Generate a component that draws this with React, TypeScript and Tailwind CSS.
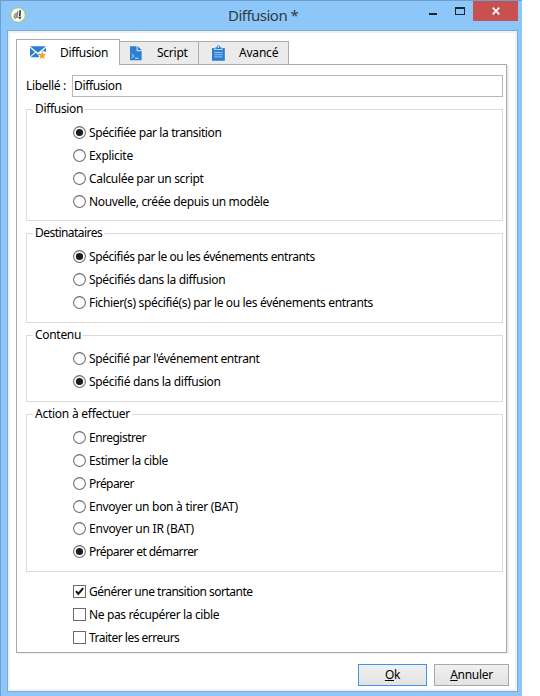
import type { ReactNode } from "react";

type Item = { label: string; on?: boolean; track?: string };

function Radio({ label, on, track = "" }: Item) {
  return (
    <label className="flex h-[22.9px] items-center gap-[3px] pl-[46px]">
      <svg className="shrink-0" width="13" height="13" viewBox="0 0 13 13">
        <circle cx="6.5" cy="6.5" r="5.9" fill="#fff" stroke="#6b6b6b" strokeWidth="1.05" />
        {on && <circle cx="6.5" cy="6.5" r="3.6" fill="#1d1d1d" />}
      </svg>
      <span className={`whitespace-nowrap pt-px leading-4 ${track}`}>{label}</span>
    </label>
  );
}

function Check({ label, on, track = "" }: Item) {
  return (
    <label className="flex h-[22.9px] items-center gap-[3px]">
      <svg className="shrink-0" width="13" height="13" viewBox="0 0 13 13">
        <rect x="0.5" y="0.5" width="12" height="12" fill="#fff" stroke="#6b6b6b" />
        {on && <path d="M3 6.2 5.3 9 10.2 3.2" fill="none" stroke="#111" strokeWidth="2" />}
      </svg>
      <span className={`whitespace-nowrap pt-px leading-4 ${track}`}>{label}</span>
    </label>
  );
}

function Group({ title, size, track, items }: { title: string; size: string; track: string; items: Item[] }) {
  return (
    <fieldset className={`border border-[#dcdcdc] ${size}`}>
      <legend className={`ml-[6px] h-4 px-[2px] leading-4 ${track}`}>{title}</legend>
      <div className="pt-[3.95px]">
        {items.map((i) => (
          <Radio key={i.label} {...i} />
        ))}
      </div>
    </fieldset>
  );
}

function Tab({ icon, className, children }: { icon: ReactNode; className: string; children: ReactNode }) {
  return <div className={`flex items-center border-[#acacac] ${className}`}>{icon}{children}</div>;
}

const mailIcon = (
  <svg width="17" height="14" viewBox="0 0 17 14">
    <path d="M0 .3H16L8 6.8Z" fill="#2b7fd0" />
    <path d="M0 1.7 5 6 0 10.5ZM16 1.7V6L13.2 5 11.3 6ZM.5 11.3 5.8 6.8 8 8.7 10 7.2 10.4 8.5 8.2 9 9.4 11.3Z" fill="#2b7fd0" />
    <path d="m12.2 5.2 1.1 2.7 2.9.3-2.2 1.9.7 2.9-2.5-1.5-2.5 1.5.7-2.9-2.2-1.9 2.9-.3Z" fill="#f2a02c" />
  </svg>
);

const scriptIcon = (
  <svg width="12" height="15" viewBox="0 0 12 15">
    <path d="M0 .3H6.6V5.2H11.6V14.3H0Z" fill="#2b7fd0" />
    <path d="M7.6 0 11.8 4.2H7.6Z" fill="#2b7fd0" />
    <path d="m1.7 8.2 2.1 1.8-2.1 1.9M5 12.2h3.5" fill="none" stroke="#e5f1fb" strokeWidth=".9" />
  </svg>
);

const clipIcon = (
  <svg width="13" height="16" viewBox="0 0 13 16">
    <path d="M0 3H2.3V5H10.5V3H12.8V15.7H0Z" fill="#2b7fd0" />
    <path d="M3.2 4.2V2.4H4.6C4.8-.5 8.2-.5 8.4 2.4H9.8V4.2Z" fill="#2b7fd0" />
    <circle cx="6.5" cy="1.9" r=".8" fill="#fff" />
    <path d="M2.2 7.5H10.6M2.2 9.7H10.6M2.2 11.9H10.6" stroke="#a5cdf0" strokeWidth=".9" />
  </svg>
);

export default function App() {
  return (
    <div className="h-[696px] w-[540px] overflow-hidden bg-white font-['Noto_Sans','Open_Sans',sans-serif] text-[12px] text-black">
      <div className="flex h-[696px] w-[522px] flex-col border-l border-t border-[#6c9fcf] bg-[#8dc7fa]">
        <header className="flex h-[29px] items-start">
          <svg className="ml-[9px] mt-[6px] shrink-0" width="16" height="16" viewBox="0 0 16 16">
            <circle cx="8" cy="8" r="7.3" fill="#f7f9f4" stroke="#a3bf55" strokeWidth=".9" />
            <path d="M7 6.2C5 5.8 3.8 8 4.2 10.5 4.5 12.5 6.5 11.5 7 9.5" fill="#aaa" stroke="#777" strokeWidth=".8" />
            <path d="M7.8 4 7.1 11" stroke="#777" strokeWidth="1.1" />
            <path d="M10.2 3.2 9.8 9.5" stroke="#333" strokeWidth="1.6" />
            <path d="m8 10.3 3.6-.5-1.6 2.6Z" fill="#444" />
          </svg>
          <h1 className="ml-[202px] mt-[4px] w-[72px] whitespace-nowrap text-[15px] leading-5 tracking-[-0.52px] text-[#333b43]">Diffusion *</h1>
          <div className="ml-[129px] mt-[12px] h-[2px] w-[8px] bg-[#1c2530]" />
          <div className="ml-[18px] mt-[6px] h-[8px] w-[10px] border border-t-2 border-[#1c2530]" />
          <div className="ml-auto mr-[4px] flex h-5 w-[45px] items-center justify-center bg-[#c75050]">
            <svg width="8" height="8" viewBox="0 0 8 8">
              <path d="m.7.7 6.6 6.6M7.3.7.7 7.3" stroke="#fff" strokeWidth="1.7" />
            </svg>
          </div>
        </header>

        <main className="ml-[6px] h-[662px] w-[511px] border border-[#78abd9] bg-white">
          <div className="flex h-[660px] flex-col border-2 border-[#f1f1f1] pl-[6px] pr-[5px] pt-[6px]">
            <nav className="relative z-10 -mb-px flex h-[26px] items-end">
              <Tab icon={mailIcon} className="h-[26px] w-[104px] gap-[13px] border-l border-r border-t bg-white pl-[13px]">
                <span className="tracking-[-0.33px]">Diffusion</span>
              </Tab>
              <Tab icon={scriptIcon} className="h-[24px] w-[79px] gap-[15px] border-b border-r border-t bg-[#ebebeb] pl-[10px]">
                <span className="tracking-[-0.25px]">Script</span>
              </Tab>
              <Tab icon={clipIcon} className="h-[24px] w-[90px] gap-[14px] border-b border-r border-t bg-[#ebebeb] pl-[13px]">
                <span className="tracking-[-0.2px]">Avancé</span>
              </Tab>
            </nav>

            <section className="h-[589px] w-[491px] border border-[#a9a9a9] pl-[9px] shadow-[2px_1px_0_#ededed]">
              <div className="mt-[10px] flex h-[22px] items-center">
                <span className="w-[46px] whitespace-nowrap tracking-[-0.33px]">Libellé :</span>
                <div className="flex h-[22px] w-[431px] items-center border border-[#b6b6bb] pl-px tracking-[-0.36px]">Diffusion</div>
              </div>
              <div className="mt-[4px] flex w-[477px] flex-col gap-1">
                <Group
                  title="Diffusion"
                  track="tracking-[-0.33px]"
                  size="h-[120px]"
                  items={[
                    { label: "Spécifiée par la transition", on: true, track: "tracking-[-0.38px]" },
                    { label: "Explicite", track: "tracking-[-0.3px]" },
                    { label: "Calculée par un script", track: "tracking-[-0.33px]" },
                    { label: "Nouvelle, créée depuis un modèle", track: "tracking-[-0.35px]" },
                  ]}
                />
                <Group
                  title="Destinataires"
                  track="tracking-[-0.55px]"
                  size="h-[98px]"
                  items={[
                    { label: "Spécifiés par le ou les événements entrants", on: true, track: "tracking-[-0.42px]" },
                    { label: "Spécifiés dans la diffusion", track: "tracking-[-0.34px]" },
                    { label: "Fichier(s) spécifié(s) par le ou les événements entrants", track: "tracking-[-0.35px]" },
                  ]}
                />
                <Group
                  title="Contenu"
                  track="tracking-[-0.3px]"
                  size="h-[75px]"
                  items={[
                    { label: "Spécifié par l'événement entrant", track: "tracking-[-0.36px]" },
                    { label: "Spécifié dans la diffusion", on: true, track: "tracking-[-0.31px]" },
                  ]}
                />
                <Group
                  title="Action à effectuer"
                  track="tracking-[-0.25px]"
                  size="h-[166px]"
                  items={[
                    { label: "Enregistrer", track: "tracking-[-0.52px]" },
                    { label: "Estimer la cible", track: "tracking-[-0.38px]" },
                    { label: "Préparer", track: "tracking-[-0.55px]" },
                    { label: "Envoyer un bon à tirer (BAT)", track: "tracking-[-0.28px]" },
                    { label: "Envoyer un IR (BAT)", track: "tracking-[-0.23px]" },
                    { label: "Préparer et démarrer", on: true, track: "tracking-[-0.57px]" },
                  ]}
                />
              </div>
              <div className="ml-[47px] mt-[8px]">
                <Check label="Générer une transition sortante" on track="tracking-[-0.49px]" />
                <Check label="Ne pas récupérer la cible" track="tracking-[-0.37px]" />
                <Check label="Traiter les erreurs" track="tracking-[-0.5px]" />
              </div>
            </section>

            <footer className="mt-[11px] flex justify-end gap-[7px] pr-px">
              <button className="h-[22px] w-[69px] border border-[#3c96f0] bg-linear-to-b from-[#f0f0f0] to-[#e3e3e3] tracking-[-0.3px]">
                <u>O</u>k
              </button>
              <button className="h-[22px] w-[75px] border border-[#a9a9a9] bg-linear-to-b from-[#f0f0f0] to-[#e3e3e3] tracking-[-0.3px]">
                <u>A</u>nnuler
              </button>
            </footer>
          </div>
        </main>
      </div>
    </div>
  );
}
